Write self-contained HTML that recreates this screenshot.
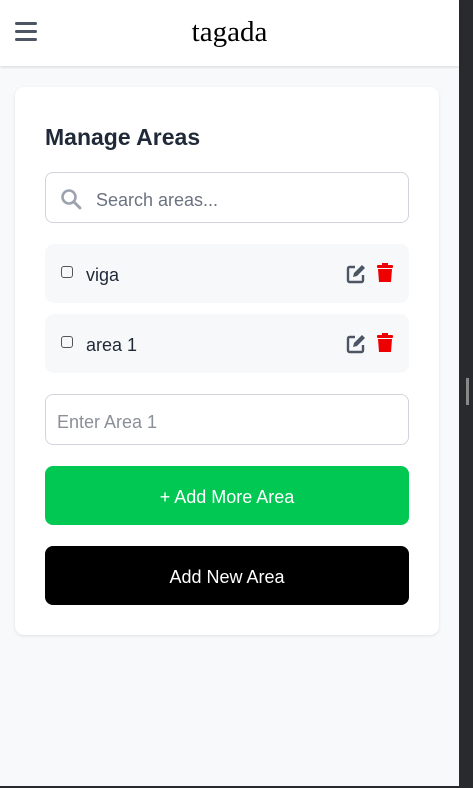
<!DOCTYPE html>
<html><head><style>
body{margin:0;width:473px;height:788px;background:#292a2d;font-family:"Liberation Sans",sans-serif;overflow:hidden;position:relative}
.page{position:absolute;left:0;top:0;width:459px;height:786px;background:#f8f9fb}
.hdr{position:absolute;left:0;top:0;width:459px;height:66px;background:#fff;box-shadow:0 1px 3px rgba(0,0,0,.15)}
.ham{position:absolute;left:15px;top:22px;width:22px}
.ham div{height:3px;background:#4b5563;border-radius:2px;margin-bottom:5px}
.title{position:absolute;left:0;width:459px;top:16px;text-align:center;font-family:"Liberation Serif",serif;font-size:29px;color:#000}
.card{position:absolute;left:15px;top:87px;width:424px;height:548px;background:#fff;border-radius:9px;box-shadow:0 1px 3px rgba(0,0,0,.1)}
h1{position:absolute;left:30px;top:37px;margin:0;font-size:23px;font-weight:bold;color:#1f2937}
.in{position:absolute;left:30px;width:364px;height:51px;border:1px solid #d1d5db;border-radius:8px;box-sizing:border-box;font-size:18px;color:#6b7280}
.row{position:absolute;left:30px;width:364px;height:59px;background:#f7f8fa;border-radius:9px}
.cb{position:absolute;left:16px;top:22px;width:12px;height:12px;border:1px solid #555;border-radius:3px;box-sizing:border-box}
.lbl{position:absolute;left:41px;top:21px;font-size:18px;color:#1f2937}
.btn{position:absolute;left:30px;width:364px;height:59px;border-radius:8px;color:#fff;font-size:18px;text-align:center;line-height:62px}
</style></head><body>
<div class="page">
<div class="hdr"><div class="ham"><div></div><div></div><div></div></div><div class="title">tagada</div></div>
<div class="card">
<h1>Manage Areas</h1>
<div class="in" style="top:85px"><svg style="position:absolute;left:14px;top:15px" width="22" height="22" viewBox="0 0 22 22"><circle cx="9" cy="9" r="6.5" fill="none" stroke="#9ca3af" stroke-width="2.6"/><line x1="14" y1="14" x2="20" y2="20" stroke="#9ca3af" stroke-width="2.8" stroke-linecap="round"/></svg><span style="position:absolute;left:50px;top:17px">Search areas...</span></div>
<div class="row" style="top:157px"><div class="cb"></div><div class="lbl">viga</div>
<svg style="position:absolute;left:301px;top:20px" width="22" height="20" viewBox="0 0 22 20"><path d="M9 3H3.5A1.5 1.5 0 0 0 2 4.5v12A1.5 1.5 0 0 0 3.5 18h12a1.5 1.5 0 0 0 1.5-1.5V11" fill="none" stroke="#4b5563" stroke-width="2.4"/><path d="M16 1l3 3-8 8-4 1 1-4z" fill="#4b5563"/></svg>
<svg style="position:absolute;left:331px;top:19px" width="18" height="20" viewBox="0 0 18 20"><rect x="1" y="2" width="16" height="3" rx="1" fill="#e00"/><rect x="6" y="0" width="6" height="3" fill="#e00"/><path d="M2 6h14l-1 13H3z" fill="#e00"/></svg></div>
<div class="row" style="top:227px"><div class="cb"></div><div class="lbl">area 1</div>
<svg style="position:absolute;left:301px;top:20px" width="22" height="20" viewBox="0 0 22 20"><path d="M9 3H3.5A1.5 1.5 0 0 0 2 4.5v12A1.5 1.5 0 0 0 3.5 18h12a1.5 1.5 0 0 0 1.5-1.5V11" fill="none" stroke="#4b5563" stroke-width="2.4"/><path d="M16 1l3 3-8 8-4 1 1-4z" fill="#4b5563"/></svg>
<svg style="position:absolute;left:331px;top:19px" width="18" height="20" viewBox="0 0 18 20"><rect x="1" y="2" width="16" height="3" rx="1" fill="#e00"/><rect x="6" y="0" width="6" height="3" fill="#e00"/><path d="M2 6h14l-1 13H3z" fill="#e00"/></svg></div>
<div class="in" style="top:307px;width:364px;height:51px"><span style="position:absolute;left:11px;top:17px;color:#8a8f98">Enter Area 1</span></div>
<div class="btn" style="top:379px;background:#00c853">+ Add More Area</div>
<div class="btn" style="top:459px;background:#000">Add New Area</div>
</div>
</div>
<div style="position:absolute;left:466px;top:378px;width:3px;height:27px;background:#888"></div>
</body></html>
